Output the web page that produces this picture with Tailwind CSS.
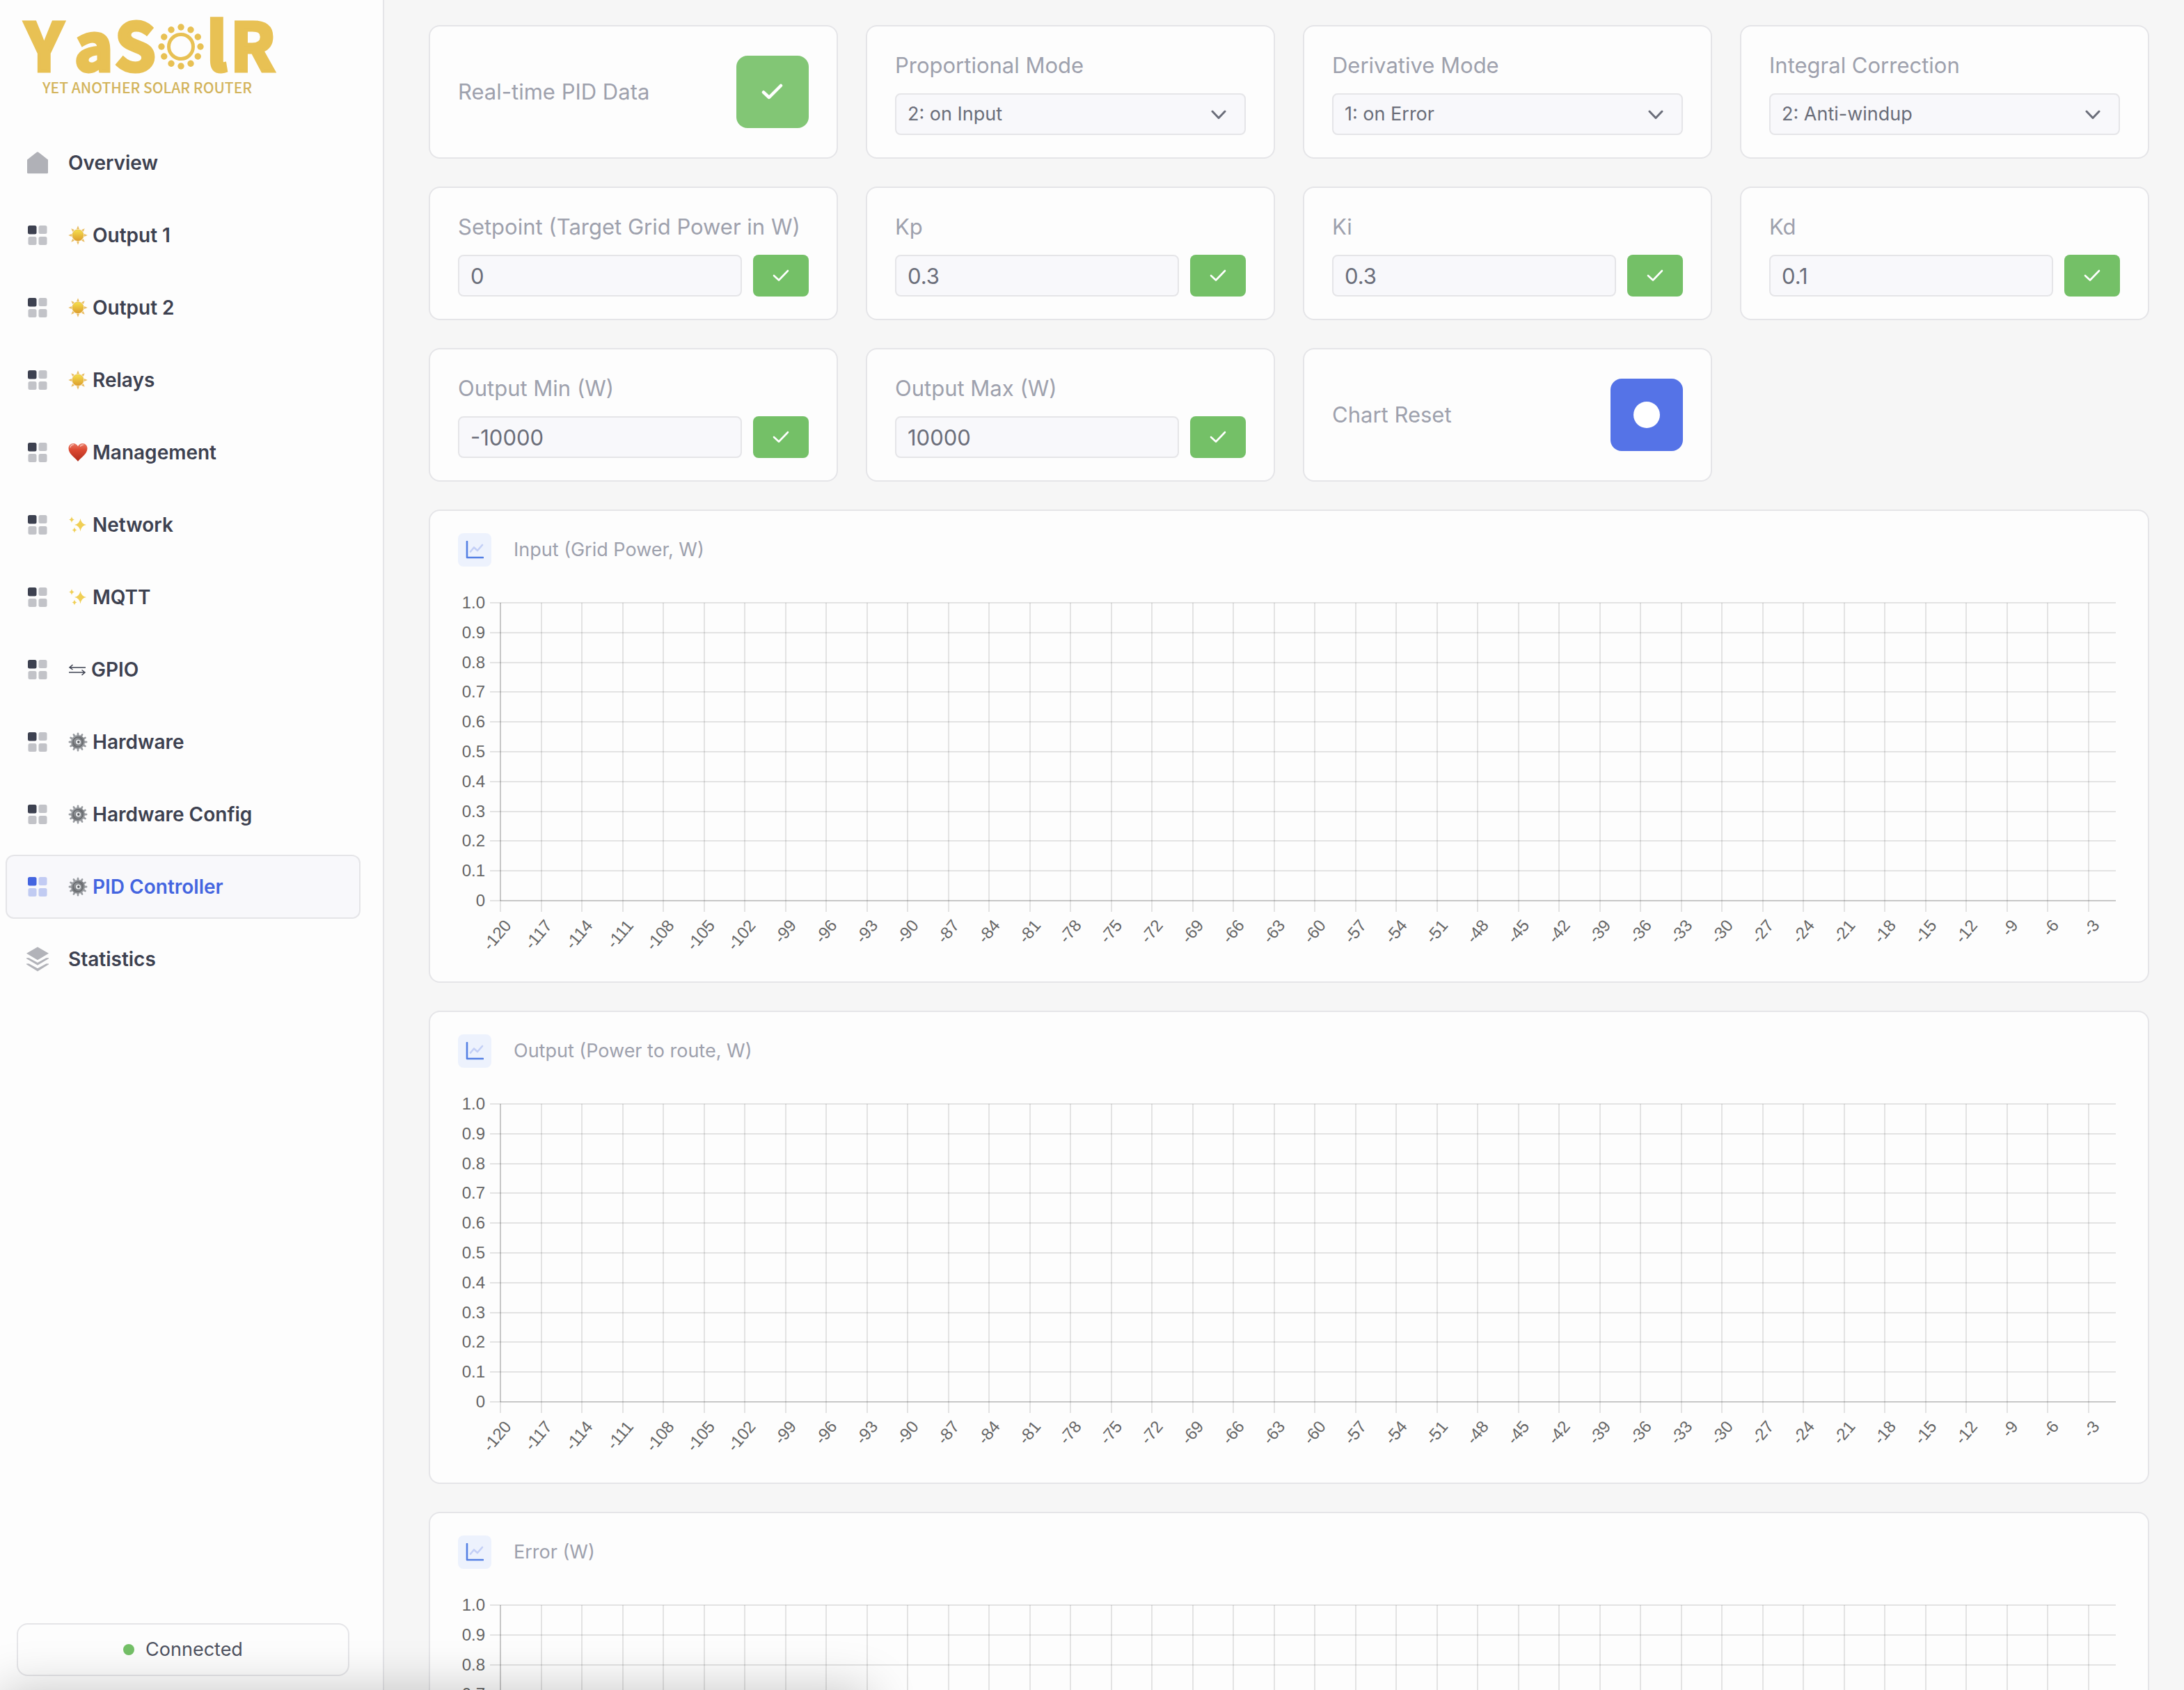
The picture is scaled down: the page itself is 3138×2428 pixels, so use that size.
<!DOCTYPE html>
<html lang="en">
<head>
<meta charset="utf-8">
<meta name="viewport" content="width=device-width, initial-scale=1">
<title>YaSolR - PID Controller</title>
<script src="https://cdn.jsdelivr.net/npm/@tailwindcss/browser@4"></script>
</head>
<body class="bg-[#f6f6f6] font-['Inter',sans-serif]">

<!-- Shared icons -->
<svg class="absolute size-0" aria-hidden="true">
  <defs>
    <linearGradient id="sun-fill" x1="0" y1="0" x2="0" y2="1"><stop offset="0" stop-color="#f6e04e"/><stop offset="1" stop-color="#dc9c2c"/></linearGradient>
    <linearGradient id="heart-fill" x1="0" y1="0" x2="0" y2="1"><stop offset="0" stop-color="#ea7a66"/><stop offset=".35" stop-color="#dd4a33"/><stop offset="1" stop-color="#b02c1c"/></linearGradient>
    <linearGradient id="gear-fill" x1="0" y1="0" x2="1" y2="1"><stop offset="0" stop-color="#b4b8bc"/><stop offset=".5" stop-color="#777a7e"/><stop offset="1" stop-color="#a9acb0"/></linearGradient>
  </defs>
  <symbol id="i-grid" viewBox="0 0 32 32">
    <rect x="2" y="2" width="12.5" height="12.5" rx="2.5" fill="currentColor"/>
    <g fill="currentColor" opacity=".3"><rect x="17.5" y="2" width="12" height="12" rx="2.5"/><rect x="2.5" y="18" width="12" height="12" rx="2.5"/><rect x="17.5" y="18" width="12" height="12" rx="2.5"/></g>
  </symbol>
  <symbol id="i-home" viewBox="0 0 32 32"><path d="M1 11.500 14.700 0.800q1.300-1 2.600 0L31 11.500V30q0 1.300-1.300 1.300H2.300Q1 31.300 1 30Z" fill="#b0b1b7"/></symbol>
  <symbol id="i-layers" viewBox="0 0 32 36"><g fill="#b2b3b9"><path d="M16 .5 32 9.800 16 19.300 0 9.800Z"/><path d="M0 16.200h3.600L16 23l12.400-6.800H32V17.200L16 26.800 0 17.200Z"/><path d="M0 24.400h3.600L16 31.200l12.400-6.800H32V25.600L16 35.600 0 25.600Z"/></g></symbol>
  <symbol id="i-sun" viewBox="0 0 28 28">
    <g fill="#e9bd62"><path id="ray" d="M14 .3 15.900 5H12.100Z"/><use href="#ray" transform="rotate(45 14 14)"/><use href="#ray" transform="rotate(90 14 14)"/><use href="#ray" transform="rotate(135 14 14)"/><use href="#ray" transform="rotate(180 14 14)"/><use href="#ray" transform="rotate(225 14 14)"/><use href="#ray" transform="rotate(270 14 14)"/><use href="#ray" transform="rotate(315 14 14)"/></g>
    <circle cx="14" cy="14" r="8.200" fill="url(#sun-fill)" stroke="#e0ad3c" stroke-width=".6"/>
  </symbol>
  <symbol id="i-heart" viewBox="0 0 28 28"><path d="M14 27C10.500 22 .5 16.500 .5 8.300.5 3.900 3.600 1 7.300 1c3 0 5.500 1.800 6.700 4.300C15.200 2.800 17.700 1 20.700 1c3.700 0 6.800 2.900 6.800 7.300C27.500 16.500 17.500 22 14 27Z" fill="url(#heart-fill)"/><path d="M3 6.500Q4 3 7.500 2.800M17.500 5Q19 3 21.500 3" stroke="#f6bcb0" stroke-width="1.400" stroke-linecap="round" fill="none"/></symbol>
  <symbol id="i-sparkles" viewBox="0 0 28 28"><g fill="#f0cf55"><path d="M17.500 5q1.200 7.800 8.500 9-7.300 1.200-8.500 9.500Q16.300 15.200 9 14q7.300-1.200 8.500-9Z"/><path d="M5 2q.6 4 4 4.600-3.400.6-4 4.600-.6-4-4-4.600Q4.400 6 5 2Z"/><path d="M9 17.500q.6 3.400 3.500 4-2.900.6-3.500 4-.6-3.400-3.500-4 2.900-.6 3.500-4Z"/></g></symbol>
  <symbol id="i-gear" viewBox="0 0 28 28">
    <g fill="#9a9da2"><path id="tooth" d="M12.300 5 12.800 1q1.200-1 2.400 0l.5 4Z"/><use href="#tooth" transform="rotate(30 14 14)"/><use href="#tooth" transform="rotate(60 14 14)"/><use href="#tooth" transform="rotate(90 14 14)"/><use href="#tooth" transform="rotate(120 14 14)"/><use href="#tooth" transform="rotate(150 14 14)"/><use href="#tooth" transform="rotate(180 14 14)"/><use href="#tooth" transform="rotate(210 14 14)"/><use href="#tooth" transform="rotate(240 14 14)"/><use href="#tooth" transform="rotate(270 14 14)"/><use href="#tooth" transform="rotate(300 14 14)"/><use href="#tooth" transform="rotate(330 14 14)"/></g>
    <circle cx="14" cy="14" r="10" fill="url(#gear-fill)"/><circle cx="14" cy="14" r="7" fill="none" stroke="#67696d" stroke-width="1.600"/><circle cx="14.500" cy="14" r="3.600" fill="#e4e6e8"/><circle cx="14.800" cy="14" r="1.700" fill="#55575b"/>
  </symbol>
  <symbol id="i-swap" viewBox="0 0 26 28"><path d="M25 11H2M6.500 7 2 11l4.500 3M1 18h23M19.500 14.500 24 18l-4.500 4" fill="none" stroke="currentColor" stroke-width="1.500"/></symbol>
  <symbol id="i-check" viewBox="0 0 32 24"><path d="M3 12.500 11 20 28 3" fill="none" stroke="currentColor" stroke-width="4.500" stroke-linecap="round" stroke-linejoin="round"/></symbol>
  <symbol id="i-check-thin" viewBox="0 0 24 18"><path d="M2 9 9 15.500 22 2" fill="none" stroke="currentColor" stroke-width="2.600" stroke-linecap="round" stroke-linejoin="round"/></symbol>
  <symbol id="i-chevron" viewBox="0 0 22 14"><path d="M2 2 11 11.500 20 2" fill="none" stroke="currentColor" stroke-width="3" stroke-linecap="round" stroke-linejoin="round"/></symbol>
  <symbol id="i-chart" viewBox="0 0 26 26"><path d="M2 1V24H25" fill="none" stroke="#5580e4" stroke-width="2.600" stroke-linecap="round" stroke-linejoin="round"/><path d="M7 15.500 12 9.500 17 14 24 6" fill="none" stroke="#c3cff6" stroke-width="2.600" stroke-linecap="round" stroke-linejoin="round"/></symbol>
</svg>

<div class="relative flex h-screen overflow-hidden">
  <aside class="flex w-[552px] shrink-0 flex-col border-r-2 border-[#e5e5e8] bg-[#fdfdfd] pr-8 pl-2">
    <svg class="h-[188px] w-[400px] overflow-visible" viewBox="8 0 400 188" role="img" aria-label="YaSolR, Yet Another Solar Router">
      <g fill="#e8c154" font-family="'Noto Sans CJK SC', sans-serif">
        <text font-size="94" font-weight="700" y="102" x="36 107 165 297 331" stroke="#e8c154" stroke-width="5">YaSlR</text>
        <circle cx="260" cy="67" r="17.500" fill="none" stroke="#e8c154" stroke-width="5"/>
        <g><circle id="dot" cx="260" cy="39" r="4.700"/><use href="#dot" transform="rotate(30 260 67)"/><use href="#dot" transform="rotate(60 260 67)"/><use href="#dot" transform="rotate(90 260 67)"/><use href="#dot" transform="rotate(120 260 67)"/><use href="#dot" transform="rotate(150 260 67)"/><use href="#dot" transform="rotate(180 260 67)"/><use href="#dot" transform="rotate(210 260 67)"/><use href="#dot" transform="rotate(240 260 67)"/><use href="#dot" transform="rotate(270 260 67)"/><use href="#dot" transform="rotate(300 260 67)"/><use href="#dot" transform="rotate(330 260 67)"/></g>
        <text font-size="21" font-weight="500" x="61" y="134" fill="#d3b45c">YET ANOTHER SOLAR ROUTER</text>
      </g>
    </svg>

    <nav class="flex flex-col gap-3 text-[28px] font-semibold text-[#3d4150]">
      <a href="#" class="flex h-[92px] items-center gap-7 rounded-xl border-2 border-transparent px-7"><svg class="size-8"><use href="#i-home"/></svg>Overview</a>
      <a href="#" class="flex h-[92px] items-center gap-7 rounded-xl border-2 border-transparent px-7"><svg class="size-8"><use href="#i-grid"/></svg><span class="flex items-center gap-[7px]"><svg class="size-7"><use href="#i-sun"/></svg>Output 1</span></a>
      <a href="#" class="flex h-[92px] items-center gap-7 rounded-xl border-2 border-transparent px-7"><svg class="size-8"><use href="#i-grid"/></svg><span class="flex items-center gap-[7px]"><svg class="size-7"><use href="#i-sun"/></svg>Output 2</span></a>
      <a href="#" class="flex h-[92px] items-center gap-7 rounded-xl border-2 border-transparent px-7"><svg class="size-8"><use href="#i-grid"/></svg><span class="flex items-center gap-[7px]"><svg class="size-7"><use href="#i-sun"/></svg>Relays</span></a>
      <a href="#" class="flex h-[92px] items-center gap-7 rounded-xl border-2 border-transparent px-7"><svg class="size-8"><use href="#i-grid"/></svg><span class="flex items-center gap-[7px]"><svg class="size-7"><use href="#i-heart"/></svg>Management</span></a>
      <a href="#" class="flex h-[92px] items-center gap-7 rounded-xl border-2 border-transparent px-7"><svg class="size-8"><use href="#i-grid"/></svg><span class="flex items-center gap-[7px]"><svg class="size-7"><use href="#i-sparkles"/></svg>Network</span></a>
      <a href="#" class="flex h-[92px] items-center gap-7 rounded-xl border-2 border-transparent px-7"><svg class="size-8"><use href="#i-grid"/></svg><span class="flex items-center gap-[7px]"><svg class="size-7"><use href="#i-sparkles"/></svg>MQTT</span></a>
      <a href="#" class="flex h-[92px] items-center gap-7 rounded-xl border-2 border-transparent px-7"><svg class="size-8"><use href="#i-grid"/></svg><span class="flex items-center gap-[7px]"><svg class="h-7 w-[26px]"><use href="#i-swap"/></svg>GPIO</span></a>
      <a href="#" class="flex h-[92px] items-center gap-7 rounded-xl border-2 border-transparent px-7"><svg class="size-8"><use href="#i-grid"/></svg><span class="flex items-center gap-[7px]"><svg class="size-7"><use href="#i-gear"/></svg>Hardware</span></a>
      <a href="#" class="flex h-[92px] items-center gap-7 rounded-xl border-2 border-transparent px-7"><svg class="size-8"><use href="#i-grid"/></svg><span class="flex items-center gap-[7px]"><svg class="size-7"><use href="#i-gear"/></svg>Hardware Config</span></a>
      <a href="#" aria-current="page" class="flex h-[92px] items-center gap-7 rounded-xl border-2 border-[#e5e5e8] bg-[#f8f8fb] px-7 text-[#4465e0]"><svg class="size-8"><use href="#i-grid"/></svg><span class="flex items-center gap-[7px]"><svg class="size-7"><use href="#i-gear"/></svg>PID Controller</span></a>
      <a href="#" class="flex h-[92px] items-center gap-7 rounded-xl border-2 border-transparent px-7"><svg class="h-9 w-8"><use href="#i-layers"/></svg>Statistics</a>
    </nav>

    <div class="mx-4 mt-auto mb-5 flex h-[76px] items-center justify-center gap-4 rounded-2xl border-2 border-[#e5e5e8] text-[27px] text-[#4f5361]" role="status">
      <span class="size-4 rounded-full bg-[#74c067]"></span>Connected
    </div>
  </aside>

  <main class="min-w-0 flex-1 overflow-y-auto pt-9 pr-[50px] pb-9 pl-16 [scrollbar-width:none]">
    <div class="grid grid-cols-4 gap-10 text-[31px] text-[#9ea1ad]">

      <section class="flex h-48 items-center justify-between rounded-2xl border-2 border-[#e5e5e8] bg-[#fdfdfd] px-10">
        <span id="realtime">Real-time PID Data</span>
        <button type="button" aria-pressed="true" aria-labelledby="realtime" class="flex size-[104px] items-center justify-center rounded-2xl bg-[#82c675] text-white"><svg class="h-6 w-8"><use href="#i-check"/></svg></button>
      </section>
      <section class="h-48 rounded-2xl border-2 border-[#e5e5e8] bg-[#fdfdfd] px-10 py-8">
        <label for="pmode" class="block leading-[48px]">Proportional Mode</label>
        <div class="relative mt-4 text-[#6b6e7a]">
          <select id="pmode" class="h-[60px] w-full appearance-none rounded-lg border-2 border-[#e5e5e8] bg-[#f8f8fb] px-4 text-[27px]"><option>2: on Input</option><option>1: on Error</option></select>
          <svg class="pointer-events-none absolute top-6 right-7 h-[14px] w-[22px]"><use href="#i-chevron"/></svg>
        </div>
      </section>
      <section class="h-48 rounded-2xl border-2 border-[#e5e5e8] bg-[#fdfdfd] px-10 py-8">
        <label for="dmode" class="block leading-[48px]">Derivative Mode</label>
        <div class="relative mt-4 text-[#6b6e7a]">
          <select id="dmode" class="h-[60px] w-full appearance-none rounded-lg border-2 border-[#e5e5e8] bg-[#f8f8fb] px-4 text-[27px]"><option>1: on Error</option><option>2: on Input</option></select>
          <svg class="pointer-events-none absolute top-6 right-7 h-[14px] w-[22px]"><use href="#i-chevron"/></svg>
        </div>
      </section>
      <section class="h-48 rounded-2xl border-2 border-[#e5e5e8] bg-[#fdfdfd] px-10 py-8">
        <label for="icorr" class="block leading-[48px]">Integral Correction</label>
        <div class="relative mt-4 text-[#6b6e7a]">
          <select id="icorr" class="h-[60px] w-full appearance-none rounded-lg border-2 border-[#e5e5e8] bg-[#f8f8fb] px-4 text-[27px]"><option>2: Anti-windup</option></select>
          <svg class="pointer-events-none absolute top-6 right-7 h-[14px] w-[22px]"><use href="#i-chevron"/></svg>
        </div>
      </section>

      <section class="h-48 rounded-2xl border-2 border-[#e5e5e8] bg-[#fdfdfd] px-10 py-8">
        <label for="setpoint" class="block leading-[48px] whitespace-nowrap">Setpoint (Target Grid Power in W)</label>
        <div class="mt-4 flex gap-4">
          <input id="setpoint" type="text" inputmode="decimal" value="0" class="h-[60px] min-w-0 flex-1 rounded-lg border-2 border-[#e5e5e8] bg-[#f8f8fb] px-4 text-[#6b6e7a]">
          <button type="button" aria-label="Apply setpoint" class="flex h-[60px] w-20 items-center justify-center rounded-lg bg-[#74c067] text-white"><svg class="h-[18px] w-6"><use href="#i-check-thin"/></svg></button>
        </div>
      </section>
      <section class="h-48 rounded-2xl border-2 border-[#e5e5e8] bg-[#fdfdfd] px-10 py-8">
        <label for="kp" class="block leading-[48px]">Kp</label>
        <div class="mt-4 flex gap-4">
          <input id="kp" type="text" inputmode="decimal" value="0.3" class="h-[60px] min-w-0 flex-1 rounded-lg border-2 border-[#e5e5e8] bg-[#f8f8fb] px-4 text-[#6b6e7a]">
          <button type="button" aria-label="Apply Kp" class="flex h-[60px] w-20 items-center justify-center rounded-lg bg-[#74c067] text-white"><svg class="h-[18px] w-6"><use href="#i-check-thin"/></svg></button>
        </div>
      </section>
      <section class="h-48 rounded-2xl border-2 border-[#e5e5e8] bg-[#fdfdfd] px-10 py-8">
        <label for="ki" class="block leading-[48px]">Ki</label>
        <div class="mt-4 flex gap-4">
          <input id="ki" type="text" inputmode="decimal" value="0.3" class="h-[60px] min-w-0 flex-1 rounded-lg border-2 border-[#e5e5e8] bg-[#f8f8fb] px-4 text-[#6b6e7a]">
          <button type="button" aria-label="Apply Ki" class="flex h-[60px] w-20 items-center justify-center rounded-lg bg-[#74c067] text-white"><svg class="h-[18px] w-6"><use href="#i-check-thin"/></svg></button>
        </div>
      </section>
      <section class="h-48 rounded-2xl border-2 border-[#e5e5e8] bg-[#fdfdfd] px-10 py-8">
        <label for="kd" class="block leading-[48px]">Kd</label>
        <div class="mt-4 flex gap-4">
          <input id="kd" type="text" inputmode="decimal" value="0.1" class="h-[60px] min-w-0 flex-1 rounded-lg border-2 border-[#e5e5e8] bg-[#f8f8fb] px-4 text-[#6b6e7a]">
          <button type="button" aria-label="Apply Kd" class="flex h-[60px] w-20 items-center justify-center rounded-lg bg-[#74c067] text-white"><svg class="h-[18px] w-6"><use href="#i-check-thin"/></svg></button>
        </div>
      </section>

      <section class="h-48 rounded-2xl border-2 border-[#e5e5e8] bg-[#fdfdfd] px-10 py-8">
        <label for="omin" class="block leading-[48px]">Output Min (W)</label>
        <div class="mt-4 flex gap-4">
          <input id="omin" type="text" inputmode="decimal" value="-10000" class="h-[60px] min-w-0 flex-1 rounded-lg border-2 border-[#e5e5e8] bg-[#f8f8fb] px-4 text-[#6b6e7a]">
          <button type="button" aria-label="Apply output min" class="flex h-[60px] w-20 items-center justify-center rounded-lg bg-[#74c067] text-white"><svg class="h-[18px] w-6"><use href="#i-check-thin"/></svg></button>
        </div>
      </section>
      <section class="h-48 rounded-2xl border-2 border-[#e5e5e8] bg-[#fdfdfd] px-10 py-8">
        <label for="omax" class="block leading-[48px]">Output Max (W)</label>
        <div class="mt-4 flex gap-4">
          <input id="omax" type="text" inputmode="decimal" value="10000" class="h-[60px] min-w-0 flex-1 rounded-lg border-2 border-[#e5e5e8] bg-[#f8f8fb] px-4 text-[#6b6e7a]">
          <button type="button" aria-label="Apply output max" class="flex h-[60px] w-20 items-center justify-center rounded-lg bg-[#74c067] text-white"><svg class="h-[18px] w-6"><use href="#i-check-thin"/></svg></button>
        </div>
      </section>
      <section class="flex h-48 items-center justify-between rounded-2xl border-2 border-[#e5e5e8] bg-[#fdfdfd] px-10">
        <span id="reset">Chart Reset</span>
        <button type="button" aria-labelledby="reset" class="flex size-[104px] items-center justify-center rounded-2xl bg-[#5573e7]"><span class="size-[38px] rounded-full bg-white"></span></button>
      </section>

      <section class="col-span-4 rounded-2xl border-2 border-[#e5e5e8] bg-[#fdfdfd] px-10 py-8">
        <h2 class="flex h-12 items-center gap-8 text-[27px]"><span class="flex size-12 items-center justify-center rounded-lg bg-[#edf2fd]"><svg class="size-[26px]"><use href="#i-chart"/></svg></span>Input (Grid Power, W)</h2>
        <div class="mt-[52px] mr-[6px] ml-[61px]" data-chart></div>
      </section>
      <section class="col-span-4 rounded-2xl border-2 border-[#e5e5e8] bg-[#fdfdfd] px-10 py-8">
        <h2 class="flex h-12 items-center gap-8 text-[27px]"><span class="flex size-12 items-center justify-center rounded-lg bg-[#edf2fd]"><svg class="size-[26px]"><use href="#i-chart"/></svg></span>Output (Power to route, W)</h2>
        <div class="mt-[52px] mr-[6px] ml-[61px]" data-chart></div>
      </section>
      <section class="col-span-4 rounded-2xl border-2 border-[#e5e5e8] bg-[#fdfdfd] px-10 py-8">
        <h2 class="flex h-12 items-center gap-8 text-[27px]"><span class="flex size-12 items-center justify-center rounded-lg bg-[#edf2fd]"><svg class="size-[26px]"><use href="#i-chart"/></svg></span>Error (W)</h2>
        <div class="mt-[52px] mr-[6px] ml-[61px]" data-chart></div>
      </section>
    </div>
  </main>

  <!-- Soft shade along the bottom left edge -->
  <div class="pointer-events-none absolute top-full left-0 h-40 w-[1250px] shadow-[0_0_70px_rgba(0,0,0,0.22)]"></div>
</div>

<script>
  // Empty axes: value 0..1 upwards, last 120 seconds across, a label every third second.
  const PLOT = 428, SPAN = 119;
  function axes() {
    let s = '';
    for (let i = 0; i <= 10; i++) {
      const y = Math.round(PLOT * i / 10);
      const label = i === 10 ? '0' : ((10 - i) / 10).toFixed(1);
      s += `<line x1="-15" x2="100%" y1="${y}" y2="${y}" stroke="#000" stroke-opacity=".1"/>`;
      s += `<text x="-22" y="${y + 8}" text-anchor="end">${label}</text>`;
    }
    for (let t = 0; t < 120; t += 3) {
      const x = (t / SPAN * 100) + '%';
      s += `<line x1="${x}" x2="${x}" y1="0" y2="${PLOT + 16}" stroke="#000" stroke-opacity=".1"/>`;
      s += `<svg x="${x}" y="${PLOT + 22}" class="overflow-visible"><text transform="rotate(-50)" y="22" text-anchor="end">${t - 120}</text></svg>`;
    }
    s += `<line x1="0" x2="0" y1="0" y2="${PLOT}" stroke="#000" stroke-opacity=".12"/>`;
    s += `<line x1="0" x2="100%" y1="${PLOT}" y2="${PLOT}" stroke="#000" stroke-opacity=".12"/>`;
    return s;
  }
  document.querySelectorAll('[data-chart]').forEach(el => {
    el.innerHTML = `<svg class="block h-[512px] w-full overflow-visible fill-[#666666] font-['Liberation_Sans',sans-serif] text-[24px] stroke-2 [&_text]:stroke-none" shape-rendering="crispEdges">${axes()}</svg>`;
  });
</script>
</body>
</html>
